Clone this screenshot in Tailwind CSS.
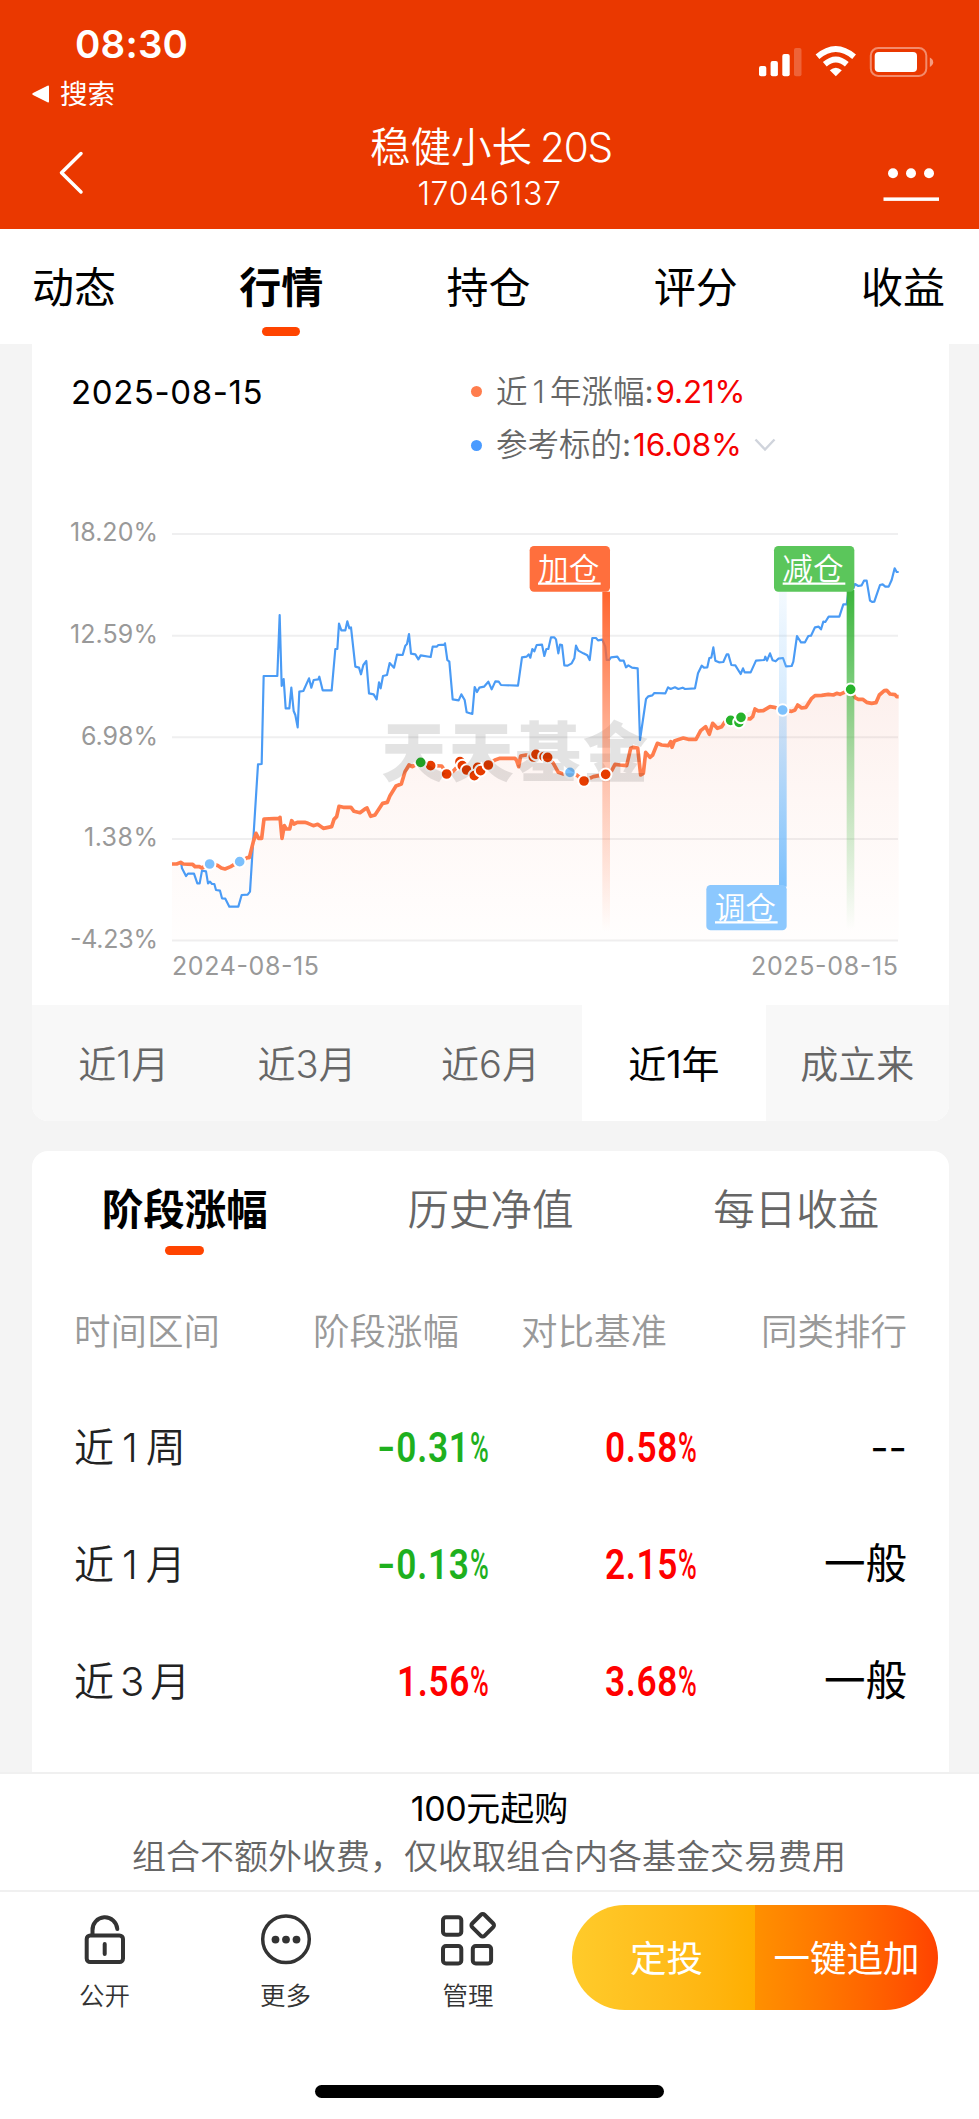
<!DOCTYPE html>
<html lang="zh-CN">
<head>
<meta charset="utf-8">
<title>稳健小长20S</title>
<script src="https://cdn.jsdelivr.net/npm/@tailwindcss/browser@4"></script>
</head>
<body class="w-[979px] h-[2119px] overflow-hidden bg-[#f4f4f4] font-['Inter','Noto_Sans_CJK_SC',sans-serif] text-black flex flex-col">

<header class="h-[228.5px] shrink-0 bg-[#ea3800] text-white flex flex-col">
  <div class="h-[112px] flex justify-between">
    <div class="pt-[23px] pl-[32px]">
      <div class="pl-[43px] h-[42px] leading-[42px] text-[38.500px] font-semibold tracking-[0.2px]">08:30</div>
      <div class="mt-[12px] h-[34px] flex items-center gap-[10px] text-[27.5px] leading-[34px]">
        <svg class="w-[18px] h-[18px]" viewBox="0 0 18 18"><path d="M17 1.500v15q0 1.500-1.500 .8L1 10q-1.500-1 0-2L15.500 .7q1.500-.7 1.500 .8z" fill="#fff"/></svg>
        <span>搜索</span>
      </div>
    </div>
    <svg class="mt-[40px] mr-[40px] w-[180px] h-[44px]" viewBox="759 40 180 44" fill="#fff">
      <rect x="759" y="66" width="7.300" height="10.300" rx="2"/><rect x="770.600" y="61" width="7.300" height="15.300" rx="2"/><rect x="782.300" y="54" width="7.400" height="22.300" rx="2"/><rect x="794" y="48" width="7.500" height="28.300" rx="2" opacity=".22"/>
      <path d="M835.800 76.200l6-6q-6-5-12 0z"/>
      <path d="M824.800 64.200q11-9.500 22 0" fill="none" stroke="#fff" stroke-width="5.800"/>
      <path d="M817.500 56.800q18.300-15.500 36.600 0" fill="none" stroke="#fff" stroke-width="5.800"/>
      <rect x="870.800" y="48" width="55.500" height="28" rx="7.500" fill="none" stroke="#fff" stroke-opacity=".42" stroke-width="2"/>
      <rect x="874.700" y="52" width="42.300" height="20" rx="4"/>
      <path d="M929.800 57.500q3.400 1.800 3.400 4.700t-3.400 4.700z" opacity=".5"/>
    </svg>
  </div>
  <div class="h-[116px] flex justify-between">
    <svg class="ml-[58px] mt-[38px] w-[38px] h-[46px]" viewBox="58 150 38 46"><path d="M81 153.500L61.500 172.800 81 192" fill="none" stroke="#fff" stroke-width="3.500" stroke-linecap="round" stroke-linejoin="round"/></svg>
    <div class="w-[400px] text-center pt-[10px]">
      <div class="h-[52px] leading-[52px] text-[40.500px] flex justify-center items-center gap-[8px] pl-[3px]"><span class="font-[350]">稳健小长</span><span class="text-[40.500px] tracking-[-1.200px] font-[350]">20S</span></div>
      <div class="h-[38px] leading-[40px] text-[32px] font-[350] tracking-[0.650px]">17046137</div>
    </div>
    <svg class="mr-[40px] mt-[50px] w-[56px] h-[42px]" viewBox="883 162 56 42" fill="#fff"><circle cx="893" cy="173.300" r="5"/><circle cx="911" cy="173.300" r="5"/><circle cx="929" cy="173.300" r="5"/><rect x="883.500" y="197.400" width="55.500" height="3.500"/></svg>
  </div>
</header>

<nav class="h-[115.5px] shrink-0 bg-white pl-[32px] pr-[34px] flex justify-between text-[42px] leading-[60px] pt-[29px]">
  <span>动态</span>
  <span class="font-bold flex flex-col items-center">行情<i class="block w-[38px] h-[9px] mt-[9px] rounded-full bg-[#ff4400]"></i></span>
  <span>持仓</span><span>评分</span><span>收益</span>
</nav>

<main class="ml-[32px] mr-[30px] h-[1428px] shrink-0 overflow-hidden">
  <section class="bg-white rounded-b-[16px] overflow-hidden h-[776.5px]">
    <div class="h-[156px] flex pt-[21px] pl-[39px]">
      <div class="w-[400px] h-[54px] leading-[54px] text-[33px] tracking-[0.600px]">2025-08-15</div>
      <div class="text-[31.500px] leading-[54px] text-[#666]">
        <div class="h-[53px] flex items-center"><i class="w-[11px] h-[11px] rounded-full bg-[#ff7d4d] mr-[14px]"></i><span class="font-[350]">近<span class="mx-[5px]">1</span>年涨幅</span><span class="pr-[2px]">:</span><b class="font-normal text-[#f50000] tracking-[-0.200px]">9.21%</b></div>
        <div class="h-[54px] flex items-center"><i class="w-[11px] h-[11px] rounded-full bg-[#4a9bff] mr-[14px]"></i><span class="font-[350]">参考标的</span><span class="pr-[2px]">:</span><b class="font-normal text-[#f50000] tracking-[-0.200px]">16.08%</b>
          <svg class="ml-[12px] w-[22px] h-[14px]" viewBox="0 0 22 14"><path d="M1.500 1.500L11 11.500 20.500 1.500" fill="none" stroke="#d0d4dc" stroke-width="2.400"/></svg></div>
      </div>
    </div>
    <svg class="block w-[917px] h-[505px]" viewBox="32 500 917 505">
      <defs>
        <linearGradient id="area" gradientUnits="userSpaceOnUse" x1="0" y1="540" x2="0" y2="1290"><stop offset="0" stop-color="#e05030" stop-opacity=".085"/><stop offset="1" stop-color="#ff7d4d" stop-opacity=".01"/></linearGradient>
        <linearGradient id="poleAdd" x1="0" y1="0" x2="0" y2="1"><stop offset="0" stop-color="#ff642d"/><stop offset=".5" stop-color="#ff642d" stop-opacity=".4"/><stop offset="1" stop-color="#ff642d" stop-opacity="0"/></linearGradient>
        <linearGradient id="poleCut" x1="0" y1="0" x2="0" y2="1"><stop offset="0" stop-color="#3cb53c"/><stop offset=".5" stop-color="#3cb53c" stop-opacity=".42"/><stop offset="1" stop-color="#3cb53c" stop-opacity="0"/></linearGradient>
        <linearGradient id="poleAdj" x1="0" y1="0" x2="0" y2="1"><stop offset="0" stop-color="#7cc0fc" stop-opacity=".05"/><stop offset=".45" stop-color="#7cc0fc" stop-opacity=".35"/><stop offset="1" stop-color="#7cc0fc"/></linearGradient>
      </defs>
      <g stroke="#efeff0" stroke-width="2"><path d="M172 534H898M172 635.700H898M172 737.300H898M172 839H898M172 940.600H898"/></g>
      <g font-size="25" fill="#999" text-anchor="end">
        <text x="158" y="541" textLength="88">18.20%</text><text x="158" y="642.500" textLength="88">12.59%</text><text x="158" y="744.500" textLength="77">6.98%</text><text x="158" y="846" textLength="74">1.38%</text><text x="158" y="947.500" textLength="88">-4.23%</text>
        <text x="319" y="975" textLength="147">2024-08-15</text><text x="898" y="975" textLength="147">2025-08-15</text>
      </g>
      <g transform="translate(160 510) scale(.333333)">
        <path fill="url(#area)" d="M36 1062L62 1057 105 1070 150 1062 195 1077 240 1055 268 1043 288 970 305 985 312 927 358 925 366 985 379 957 395 932 412 937 444 940 490 955 515 950 537 889 573 892 600 908 621 894 632 919 668 880 708 828 747 765 812 767 860 790 905 765 942 797 985 765 1020 745 1065 745 1128 732 1163 742 1195 787 1230 787 1272 813 1337 793 1365 763 1400 767 1412 715 1433 714 1442 795 1457 727 1470 742 1492 700 1515 707 1585 688 1608 688 1637 650 1658 640 1712 631 1785 597 1830 590 1868 600 1913 585 1955 565 2030 550 2072 538 2095 568 2135 580 2173 542 2216 560V1292H36Z"/>
        <path fill="none" stroke="#4a9bf5" stroke-width="6.500" stroke-linejoin="round" d="M58 1058L64 1062 66 1075 78 1098 84 1091 102 1091 112 1120 119 1120 126 1082 138 1084 144 1120 150 1115 156 1122 163 1122 168 1140 180 1142 186 1165 196 1166 208 1190 235 1190 245 1155 263 1154 270 1145 294 763 305 762 311 498 352 498 359 315 365 528 371 507 377 595 388 595 394 533 401 603 406 615 413 652 418 545 430 543 447 505 454 533 461 510 475 508 478 500 488 541 515 541 526 417 532 417 537 341 544 361 556 361 562 334 568 355 573 352 586 470 597 473 603 493 610 465 619 453 627 550 641 553 650 568 657 517 662 535 669 498 681 495 689 459 702 473 711 434 728 435 736 407 741 402 747 372 753 431 766 433 775 448 782 436 812 441 818 410 830 410 835 405 853 404 855 400 862 450 868 455 878 568 896 571 904 553 914 570 920 607 937 612 944 531 951 546 958 533 972 530 985 515 995 538 1006 514 1016 515 1023 525 1074 527 1086 442 1100 440 1106 433 1111 443 1117 417 1123 424 1130 405 1146 404 1153 438 1159 417 1165 417 1173 382 1183 382 1188 388 1195 430 1200 404 1206 405 1213 466 1223 467 1235 460 1243 445 1248 407 1255 422 1270 430 1282 436 1289 450 1297 384 1308 384 1314 391 1327 389 1336 410 1340 450 1347 450 1353 442 1372 440 1380 452 1391 452 1398 472 1405 466 1416 473 1433 475 1440 690 1458 567 1465 559 1477 556 1483 549 1516 550 1524 532 1532 537 1545 532 1555 537 1568 533 1575 537 1605 535 1614 490 1625 467 1632 473 1642 472 1648 444 1654 443 1660 412 1666 452 1677 457 1690 456 1700 433 1705 433 1714 465 1726 466 1742 492 1749 475 1754 487 1772 487 1788 452 1813 450 1816 440 1821 452 1830 430 1838 451 1847 454 1855 446 1869 444 1878 469 1895 468 1900 455 1911 378 1923 397 1935 397 1945 378 1953 377 1965 352 1976 350 1983 358 1990 335 1996 336 2006 320 2038 320 2050 283 2060 283 2066 240 2080 235 2085 222 2095 228 2105 226 2112 212 2120 212 2130 272 2137 276 2143 275 2148 260 2160 225 2168 223 2176 230 2186 230 2195 210 2204 175 2210 186 2216 186"/>
        <path fill="none" stroke="#ff7d4d" stroke-width="11" stroke-linejoin="round" d="M36 1062L50 1062 62 1057 70 1062 98 1063 105 1070 118 1070 125 1074 150 1062 172 1066 184 1074 195 1077 212 1070 220 1065 240 1055 262 1043 268 1043 280 995 288 970 296 985 305 985 312 927 358 925 360 922 366 985 373 947 379 957 389 957 395 932 402 942 412 937 434 937 444 940 460 947 473 943 490 955 515 950 522 928 530 920 537 889 550 892 573 892 582 904 600 908 616 896 621 894 632 919 645 915 668 880 682 877 690 857 708 828 724 822 735 785 747 765 757 770 782 757 812 767 845 768 860 790 878 785 892 770 905 765 920 780 942 797 962 780 985 765 1005 750 1020 745 1065 745 1070 752 1076 770 1082 738 1098 735 1115 738 1128 732 1163 742 1180 760 1195 787 1210 792 1230 787 1250 795 1272 813 1300 800 1337 793 1355 782 1365 763 1380 765 1400 767 1412 715 1420 712 1433 714 1442 795 1450 790 1457 727 1470 742 1478 735 1492 700 1505 705 1525 707 1532 695 1536 712 1543 693 1558 688 1570 684 1585 688 1608 688 1622 662 1637 650 1648 673 1658 640 1672 655 1685 650 1695 635 1712 631 1743 623 1770 627 1778 620 1785 597 1795 603 1810 602 1830 590 1843 592 1868 600 1895 604 1905 600 1913 585 1925 594 1938 592 1955 565 1965 557 1985 556 2005 553 2020 555 2030 550 2040 553 2072 538 2085 563 2095 568 2108 568 2120 577 2135 580 2148 578 2158 555 2173 542 2180 541 2190 552 2205 554 2210 560 2216 560"/>
        <g fill="#e63c00" stroke="#fff" stroke-width="6">
          <circle cx="812" cy="767" r="17.500"/><circle cx="860" cy="792" r="17.500"/><circle cx="900" cy="755" r="17.500"/><circle cx="907" cy="767" r="17.500"/><circle cx="920" cy="780" r="17.500"/><circle cx="953" cy="772" r="17.500"/><circle cx="943" cy="797" r="17.500"/><circle cx="962" cy="782" r="17.500"/><circle cx="985" cy="765" r="17.500"/><circle cx="1120" cy="741" r="17.500"/><circle cx="1128" cy="733" r="17.500"/><circle cx="1152" cy="740" r="17.500"/><circle cx="1163" cy="742" r="17.500"/><circle cx="1272" cy="813" r="17.500"/>
          <g fill="#26b32a"><circle cx="782" cy="757" r="17.500"/><circle cx="1712" cy="631" r="17.500"/><circle cx="1737" cy="637" r="17.500"/><circle cx="1743" cy="622" r="17.500"/></g>
          <g fill="#7cc0fc"><circle cx="149" cy="1062" r="17.500"/><circle cx="239" cy="1055" r="17.500"/><circle cx="1230" cy="787" r="17.500"/></g>
        </g>
        <text x="664" y="797" font-size="196" font-weight="900" fill="#000" fill-opacity=".11" textLength="800">天天基金</text>
        <rect x="1327" y="245" width="23" height="1020" fill="url(#poleAdd)"/>
        <rect x="1857" y="200" width="23" height="930" fill="url(#poleAdj)"/>
        <rect x="2060" y="240" width="23" height="1020" fill="url(#poleCut)"/>
        <rect x="1109" y="108" width="241" height="137" rx="13" fill="#ff6f3d"/>
        <rect x="1842" y="108" width="241" height="137" rx="13" fill="#5bc65b"/>
        <rect x="1639" y="1125" width="241" height="136" rx="13" fill="#8cc8fe"/>
        <g stroke="#fff" stroke-width="6"><circle cx="1337" cy="793" r="17.500" fill="#e63c00"/><circle cx="1868" cy="600" r="17.500" fill="#7cc0fc"/><circle cx="2072" cy="538" r="17.500" fill="#26b32a"/></g>
        <g fill="#fff" font-size="92" font-weight="350"><text x="1134" y="210">加仓</text><text x="1867" y="210">减仓</text><text x="1664" y="1226">调仓</text></g>
        <path d="M1134 221H1322M1868 221H2056M1665 1237H1853" stroke="#fff" stroke-width="6.500"/>
      </g>
    </svg>
    <div class="h-[115.5px] grid grid-cols-5 text-center text-[38px] leading-[118px] text-[#666] bg-[#f8f8f8] font-[350]">
      <span>近1月</span><span>近3月</span><span>近6月</span><span class="bg-white text-black font-normal">近1年</span><span>成立来</span>
    </div>
  </section>

  <section class="mt-[30.5px] bg-white rounded-t-[16px] h-[625px]">
    <div class="h-[132px] grid grid-cols-3 text-center text-[41.500px] leading-[60px] text-[#666] pt-[29px] font-[350]">
      <span class="text-black font-bold flex flex-col items-center">阶段涨幅<i class="block w-[39px] h-[9px] mt-[6px] rounded-full bg-[#ff4400]"></i></span><span>历史净值</span><span>每日收益</span>
    </div>
    <div class="h-[97px] px-[42px] grid grid-cols-[239px_208px_240px_1fr] items-center text-[36.500px] text-[#999] font-[350] leading-[99px]">
      <span>时间区间</span><span>阶段涨幅</span><span>对比基准</span><span class="whitespace-nowrap">同类排行</span>
    </div>
    <div class="pt-[9px] px-[42px] text-[40px] leading-[117px]">
      <div class="h-[117px] grid grid-cols-[240px_175px_208px_1fr] items-center text-right">
        <span class="text-left text-[#222] font-[350]">近<span class="mx-[8px]">1</span>周</span>
        <span class="flex justify-end text-[#1eb01e] font-['Roboto'] text-[42.500px] tracking-[0.800px]"><span class="origin-right scale-x-[.83] font-semibold"><span class="inline-block scale-x-[1.400] origin-right">-</span>0.31</span><span class="w-[19px] font-medium origin-left scale-x-[.6]">%</span></span>
        <span class="flex justify-end text-[#ff0000] font-['Roboto'] text-[42.500px] tracking-[0.800px]"><span class="origin-right scale-x-[.83] font-semibold">0.58</span><span class="w-[19px] font-medium origin-left scale-x-[.6]">%</span></span>
        <span>--</span>
      </div>
      <div class="h-[117px] grid grid-cols-[240px_175px_208px_1fr] items-center text-right">
        <span class="text-left text-[#222] font-[350]">近<span class="mx-[8px]">1</span>月</span>
        <span class="flex justify-end text-[#1eb01e] font-['Roboto'] text-[42.500px] tracking-[0.800px]"><span class="origin-right scale-x-[.83] font-semibold"><span class="inline-block scale-x-[1.400] origin-right">-</span>0.13</span><span class="w-[19px] font-medium origin-left scale-x-[.6]">%</span></span>
        <span class="flex justify-end text-[#ff0000] font-['Roboto'] text-[42.500px] tracking-[0.800px]"><span class="origin-right scale-x-[.83] font-semibold">2.15</span><span class="w-[19px] font-medium origin-left scale-x-[.6]">%</span></span>
        <span class="text-[41.500px]">一般</span>
      </div>
      <div class="h-[117px] grid grid-cols-[240px_175px_208px_1fr] items-center text-right">
        <span class="text-left text-[#222] font-[350]">近<span class="mx-[6px]">3</span>月</span>
        <span class="flex justify-end text-[#ff0000] font-['Roboto'] text-[42.500px] tracking-[0.800px]"><span class="origin-right scale-x-[.83] font-semibold">1.56</span><span class="w-[19px] font-medium origin-left scale-x-[.6]">%</span></span>
        <span class="flex justify-end text-[#ff0000] font-['Roboto'] text-[42.500px] tracking-[0.800px]"><span class="origin-right scale-x-[.83] font-semibold">3.68</span><span class="w-[19px] font-medium origin-left scale-x-[.6]">%</span></span>
        <span class="text-[41.500px]">一般</span>
      </div>
    </div>
  </section>
</main>

<footer class="h-[347px] shrink-0 bg-white border-t-2 border-[#f0f0f0]">
  <div class="h-[118px] border-b-2 border-[#f0f0f0] text-center text-[34px] pt-[11px]">
    <div class="h-[48px] leading-[48px]"><span class="tracking-[-0.400px]">100</span>元起购</div>
    <div class="h-[48px] leading-[48px] text-[#666] font-[350] pr-[1px]">组合不额外收费，仅收取组合内各基金交易费用</div>
  </div>
  <div class="h-[150px] flex text-[25.500px] text-[#333]">
    <div class="w-[181px] ml-[14px] flex flex-col items-center pt-[18px]">
      <svg class="w-[60px] h-[60px] shrink-0" viewBox="75 1910 60 60" fill="none" stroke="#333" stroke-width="4" stroke-linecap="round"><rect x="86.700" y="1935.500" width="36.300" height="26.500" rx="3.500"/><path d="M92.500 1935V1930.500A12.300 12.300 0 0 1 117.300 1929M104.700 1944V1954"/></svg>
      <span class="leading-[52px] font-[350]">公开</span>
    </div>
    <div class="w-[181px] flex flex-col items-center pt-[18px]">
      <svg class="w-[60px] h-[60px] shrink-0" viewBox="256 1910 60 60" fill="#333"><circle cx="286" cy="1939.300" r="23.300" fill="none" stroke="#333" stroke-width="3.500"/><circle cx="275.500" cy="1939.600" r="3.900"/><circle cx="286" cy="1939.600" r="3.900"/><circle cx="296.500" cy="1939.600" r="3.900"/></svg>
      <span class="leading-[52px] font-[350]">更多</span>
    </div>
    <div class="w-[184px] flex flex-col items-center pt-[18px]">
      <svg class="w-[60px] h-[60px] shrink-0" viewBox="438 1910 60 60" fill="none" stroke="#333" stroke-width="4"><rect x="443" y="1917.300" width="18.300" height="17.500" rx="3"/><rect x="443" y="1946" width="18.300" height="17.500" rx="3"/><rect x="472.800" y="1946" width="18.300" height="17.500" rx="3"/><rect x="474" y="1916.600" width="17.400" height="17.400" rx="2.500" transform="rotate(45 482.700 1925.300)"/></svg>
      <span class="leading-[52px] font-[350]">管理</span>
    </div>
    <div class="ml-[12px] mt-[13px] w-[366px] h-[105px] rounded-full overflow-hidden grid grid-cols-2 text-white text-[36.500px] leading-[108px] text-center">
      <span class="bg-linear-to-r from-[#ffcb2a] to-[#ffae00] pl-[6px]">定投</span><span class="bg-linear-to-r from-[#ff9000] to-[#ff4200] whitespace-nowrap">一键追加</span>
    </div>
  </div>
  <div class="mx-auto mt-[43px] w-[349px] h-[13px] rounded-full bg-black"></div>
</footer>
</body>
</html>
